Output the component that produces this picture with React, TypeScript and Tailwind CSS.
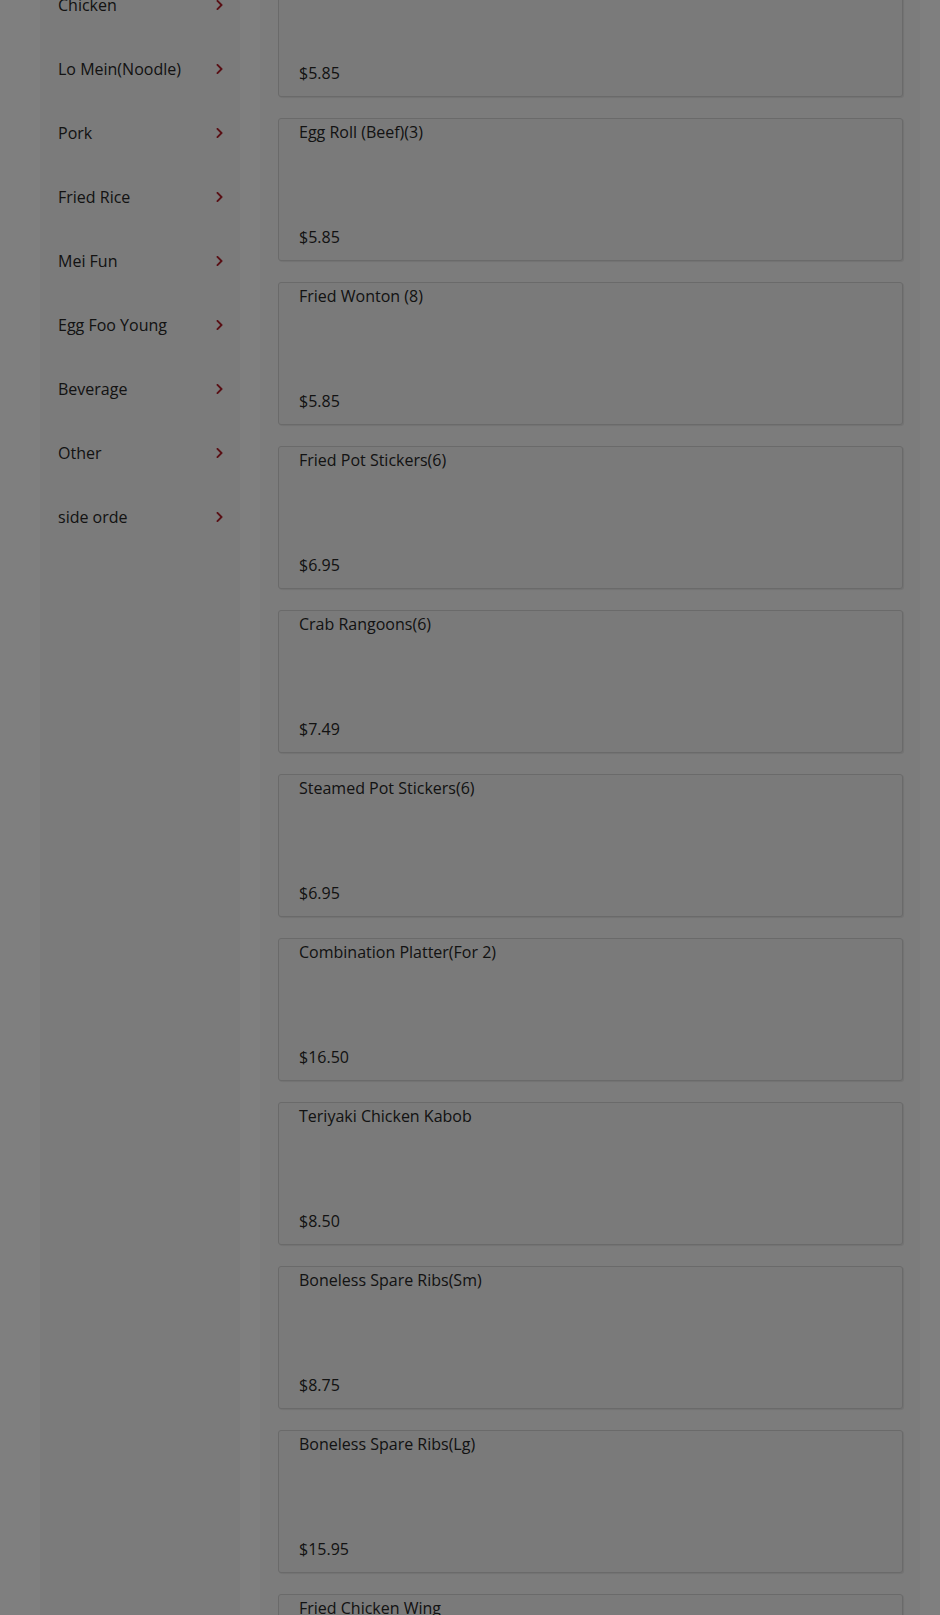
import { FaChevronRight } from 'react-icons/fa';

const categories = [
  'Chicken',
  'Lo Mein(Noodle)',
  'Pork',
  'Fried Rice',
  'Mei Fun',
  'Egg Foo Young',
  'Beverage',
  'Other',
  'side orde',
];

const items = [
  { name: 'Egg Roll (Pork)(3)', price: '$5.85' },
  { name: 'Egg Roll (Beef)(3)', price: '$5.85' },
  { name: 'Fried Wonton (8)', price: '$5.85' },
  { name: 'Fried Pot Stickers(6)', price: '$6.95' },
  { name: 'Crab Rangoons(6)', price: '$7.49' },
  { name: 'Steamed Pot Stickers(6)', price: '$6.95' },
  { name: 'Combination Platter(For 2)', price: '$16.50' },
  { name: 'Teriyaki Chicken Kabob', price: '$8.50' },
  { name: 'Boneless Spare Ribs(Sm)', price: '$8.75' },
  { name: 'Boneless Spare Ribs(Lg)', price: '$15.95' },
  { name: 'Fried Chicken Wing', price: '$9.95' },
];

export default function App() {
  return (
    <div className="relative h-[1615px] overflow-hidden bg-white font-['Open_Sans',sans-serif] text-[#262626]">
      <div className="flex pl-[40px] pr-[20px] h-full">
        {/* Category sidebar */}
        <aside className="w-[200px] shrink-0 bg-[#f6f6f6]">
          <ul className="-mt-[31px]">
            {categories.map((c) => (
              <li
                key={c}
                className="h-[64px] flex items-center justify-between pl-[18px] pr-[16px] pt-[7px] text-[16px] font-[460]"
              >
                <span>{c}</span>
                <FaChevronRight className="w-[9px] h-[12px] text-[#b3202a]" />
              </li>
            ))}
          </ul>
        </aside>

        {/* Menu items */}
        <main className="ml-[20px] w-[660px] shrink-0 bg-[#f9f9f9] pl-[18px] pr-[17px]">
          <div className="-mt-[46px] flex flex-col gap-[21px]">
            {items.map((it, i) => (
              <div
                key={i}
                className="h-[143px] flex flex-col justify-between border border-[#d4d4d4] rounded-[3px] bg-[#f4f4f4] pl-[20px] pt-[2px] pb-[12px] shadow-[1px_1px_1px_rgba(0,0,0,0.08)]"
              >
                <div className="text-[16px] leading-[22px] font-[460]">{it.name}</div>
                <div className="text-[16px] leading-[22px] font-[460]">{it.price}</div>
              </div>
            ))}
          </div>
        </main>
      </div>

      {/* Modal backdrop */}
      <div className="absolute inset-0 bg-black/50" />
    </div>
  );
}
